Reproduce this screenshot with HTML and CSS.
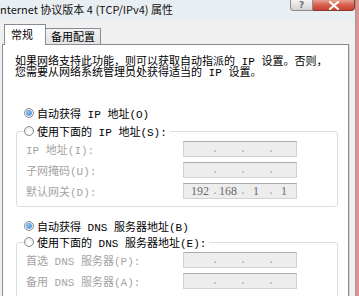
FILE: index.html
```html
<!DOCTYPE html>
<html lang="zh-CN">
<head>
<meta charset="utf-8">
<title>Internet 协议版本 4 (TCP/IPv4) 属性</title>
<link rel="stylesheet" href="styles.css">
</head>
<body>
<div class="window">
  <div class="main">
    <div class="titlebar">
      <span class="title">nternet 协议版本 4 (TCP/IPv4) 属性</span>
      <div class="caps">
        <div class="cap help">?</div>
        <div class="cap close">
          <svg width="12" height="9" viewBox="0 0 12 9"><path d="M2 1 L10 8 M10 1 L2 8" stroke="#fff" stroke-width="2.2" stroke-linecap="round"/></svg>
        </div>
      </div>
    </div>
    <div class="client">
      <div class="tabs">
        <div class="tab active">常规</div>
        <div class="tab">备用配置</div>
      </div>
      <div class="panel">
        <p class="desc">如果网络支持此功能，则可以获取自动指派的 IP 设置。否则，<br>您需要从网络系统管理员处获得适当的 IP 设置。</p>

        <div class="radio-row first"><span class="radio checked"></span><span>自动获得 IP 地址(O)</span></div>

        <div class="group g1">
          <div class="group-head"><span class="legend"><span class="radio"></span><span>使用下面的 IP 地址(S):</span></span></div>
          <div class="field"><span class="lbl">IP 地址(I):</span><div class="ip"><span class="seg"></span><span class="dot">.</span><span class="seg"></span><span class="dot">.</span><span class="seg"></span><span class="dot">.</span><span class="seg"></span></div></div>
          <div class="field"><span class="lbl">子网掩码(U):</span><div class="ip"><span class="seg"></span><span class="dot">.</span><span class="seg"></span><span class="dot">.</span><span class="seg"></span><span class="dot">.</span><span class="seg"></span></div></div>
          <div class="field"><span class="lbl">默认网关(D):</span><div class="ip filled"><span class="seg">192</span><span class="dot">.</span><span class="seg">168</span><span class="dot">.</span><span class="seg">1</span><span class="dot">.</span><span class="seg">1</span></div></div>
        </div>

        <div class="radio-row second"><span class="radio checked"></span><span>自动获得 DNS 服务器地址(B)</span></div>

        <div class="group g2">
          <div class="group-head"><span class="legend"><span class="radio"></span><span>使用下面的 DNS 服务器地址(E):</span></span></div>
          <div class="field"><span class="lbl">首选 DNS 服务器(P):</span><div class="ip"><span class="seg"></span><span class="dot">.</span><span class="seg"></span><span class="dot">.</span><span class="seg"></span><span class="dot">.</span><span class="seg"></span></div></div>
          <div class="field"><span class="lbl">备用 DNS 服务器(A):</span><div class="ip"><span class="seg"></span><span class="dot">.</span><span class="seg"></span><span class="dot">.</span><span class="seg"></span><span class="dot">.</span><span class="seg"></span></div></div>
        </div>
      </div>
    </div>
  </div>
  <div class="frame"></div>
</div>
</body>
</html>
```
FILE: styles.css
```css
* { box-sizing: border-box; }
html, body { margin: 0; padding: 0; }
html { background: #f0f0f0; }
body {
  font-family: "Liberation Mono", "Noto Sans CJK SC", monospace;
  font-size: 11px;
  color: #000;
}
.window {
  display: grid;
  grid-template-columns: 355px 4px;
  width: 359px;
  height: 296px;
  overflow: hidden;
}
.main {
  display: grid;
  grid-template-rows: 20px 276px;
  width: 355px;
  overflow: hidden;
}
.frame {
  width: 4px;
  height: 296px;
  border-left: 1px solid #9a9a9a;
  background-color: #e0928f;
}

.titlebar {
  display: flex;
  justify-content: space-between;
  align-items: flex-start;
  background-color: #e9eef2;
}
.title {
  font-family: "Noto Sans CJK SC", sans-serif;
  font-size: 11px;
  line-height: 14px;
  padding-top: 2px;
  color: #111;
  white-space: nowrap;
}
.caps { display: flex; flex: none; width: 65px; height: 11px; }
.cap {
  height: 11px;
  display: flex;
  align-items: center;
  justify-content: center;
  flex: none;
}
.help {
  width: 23px;
  border: 1px solid #8d8d8d;
  border-top: 0;
  border-radius: 0 0 0 4px;
  background-color: #dedede;
  background-image: linear-gradient(#f4f4f4, #d2d2d2);
  color: #6e6e6e;
  font-family: "DejaVu Sans", sans-serif;
  font-weight: bold;
  font-size: 9px;
  line-height: 10px;
}
.close {
  width: 42px;
  border: 1px solid #8c3a30;
  border-top: 0;
  border-left: 0;
  border-radius: 0 0 4px 0;
  background-color: #d25a46;
  background-image: linear-gradient(#e9a391, #d6604c 50%, #c8412f);
}

.client {
  display: flex;
  flex-direction: column;
  padding: 4px 0 0 2px;
  overflow: hidden;
}
.tabs {
  height: 20px;
  flex: none;
  display: flex;
  align-items: flex-end;
  padding-left: 2px;
  position: relative;
  z-index: 1;
}
.tab {
  font-family: "Noto Sans CJK SC", sans-serif;
  font-size: 11px;
  height: 16px;
  line-height: 14px;
  padding: 0 5px;
  border: 1px solid #898c95;
  border-left: none;
  border-bottom: none;
  background: linear-gradient(#f3f3f3, #e3e3e3);
}
.tab.active {
  height: 21px;
  margin-bottom: -1px;
  width: 42px;
  padding: 2px 0 0 6px;
  border-left: 1px solid #898c95;
  background: #fff;
}

.panel {
  flex: 1 0 auto;
  width: 347px;
  background: #fff;
  border: 1px solid #898c95;
  box-shadow: 1px 0 0 #d6d6d6;
  padding: 12px 0 0 12px;
}
.desc {
  margin: 0;
  line-height: 11px;
  white-space: nowrap;
}

.radio-row {
  height: 14px;
  display: flex;
  align-items: center;
  gap: 3px;
  padding-left: 9px;
}
.radio-row.first { margin-top: 27px; }
.radio-row.second { margin-top: 12px; }
.radio {
  width: 10px;
  height: 10px;
  border-radius: 50%;
  border: 1px solid #8a8e94;
  background: radial-gradient(circle at 50% 60%, #fff 20%, #dcdcdc 100%);
  display: inline-flex;
  align-items: center;
  justify-content: center;
  flex: none;
}
.radio.checked::after {
  content: "";
  width: 4px;
  height: 4px;
  border-radius: 50%;
  background: radial-gradient(circle at 40% 35%, #8fd0ff, #1a64c0);
  box-shadow: 0 0 0 1px #6aa6e0;
}

.group {
  width: 322px;
  margin-left: 1px;
  border: 1px solid #d5dfe5;
  border-radius: 3px;
  display: flex;
  flex-direction: column;
  gap: 5px;
}
.g1 { margin-top: 11px; padding-bottom: 7px; }
.g2 { margin-top: 9px; padding-bottom: 10px; }
.group-head {
  height: 14px;
  margin-top: -8px;
  margin-bottom: -2px;
  display: flex;
}
.legend {
  display: flex;
  align-items: center;
  gap: 3px;
  margin-left: 7px;
  padding-right: 3px;
  background: #fff;
}
.field {
  height: 16px;
  display: flex;
  align-items: center;
  padding-left: 9px;
}
.lbl {
  width: 157px;
  color: #a3a3a3;
  white-space: nowrap;
}
.ip {
  width: 114px;
  height: 16px;
  display: flex;
  align-items: center;
  padding-left: 4px;
  background: #ededed;
  border: 1px solid #d2d2d2;
  border-top-color: #ababab;
}
.seg {
  width: 25px;
  text-align: center;
  color: #6a6a6a;
  font-family: "Liberation Serif", serif;
  font-size: 12px;
}
.dot {
  width: 4px;
  text-align: center;
  color: #9c9c9c;
  font-size: 10px;
}
```
